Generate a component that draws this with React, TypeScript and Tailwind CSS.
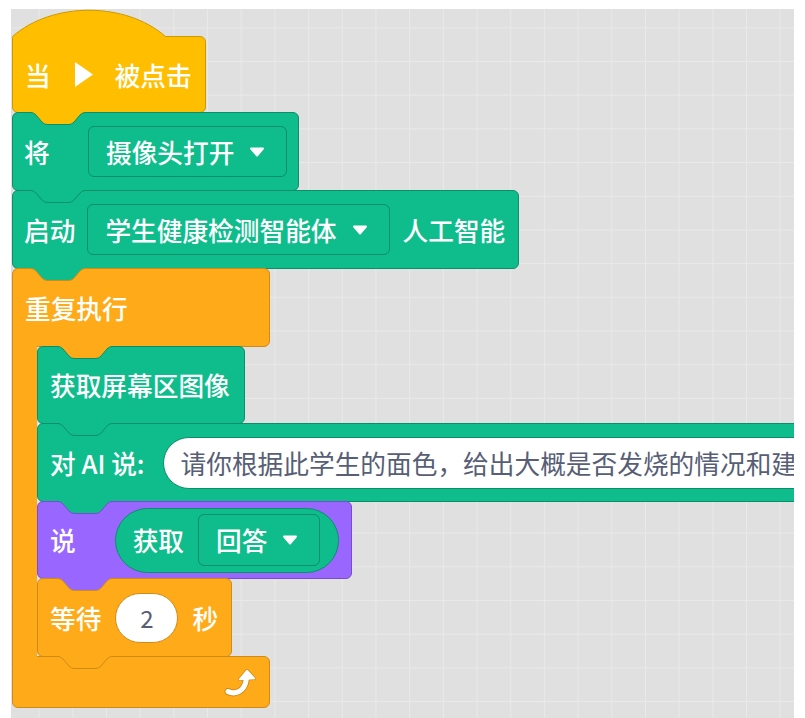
import React from "react";

// tab of the block above, sitting in the notch of the block below
function Notch({ className, fill, stroke }: { className: string; fill: string; stroke: string }) {
  return (
    <svg className={`absolute top-[-1px] ${className}`} width="56" height="14" viewBox="0 0 56 14">
      <path
        d="M0 0 L0 0.5 C3 0.5 4.5 1.5 6 3 L12 10 C13.5 11.5 15 12.5 18 12.5 H38 C41 12.5 42.5 11.5 44 10 L50 3 C51.5 1.5 53 0.5 56 0.5 L56 0 Z"
        fill={fill}
      />
      <path
        d="M0 0.5 C3 0.5 4.5 1.5 6 3 L12 10 C13.5 11.5 15 12.5 18 12.5 H38 C41 12.5 42.5 11.5 44 10 L50 3 C51.5 1.5 53 0.5 56 0.5"
        fill="none"
        stroke={stroke}
      />
    </svg>
  );
}

function Caret() {
  return (
    <svg width="16" height="10" viewBox="0 0 16 10">
      <path d="M2 1.5 H14 L8 8.5 Z" fill="white" stroke="white" strokeWidth="2" strokeLinejoin="round" />
    </svg>
  );
}

function Dropdown({ label, className }: { label: string; className: string }) {
  return (
    <div className={`flex items-center gap-[15px] rounded-md border border-[#0b8e69] pl-[17px] pr-[21px] ${className}`}>
      <span>{label}</span>
      <Caret />
    </div>
  );
}

export default function App() {
  return (
    <div className="min-h-[718px] bg-white pl-[11px] pt-[9px] font-['Noto_Sans_CJK_SC','Noto_Sans',sans-serif]">
      <div className="h-[709px] w-[783px] overflow-hidden bg-[#e0e0e0] bg-[linear-gradient(to_right,#e9e9e9_1px,transparent_1px),linear-gradient(to_bottom,#e9e9e9_1px,transparent_1px)] bg-size-[33.7px_33.7px] bg-position-[27.6px_18.3px] pl-px">
        <div className="flex flex-col items-start pt-[27px] text-[25.7px] font-medium leading-none text-white">
          {/* when flag clicked */}
          <div className="relative flex h-[77px] items-center rounded-md rounded-tl-none border border-[#cc9900] bg-[#ffbf00] pl-[12px] pr-[13px]">
            <svg className="absolute left-[-1px] top-[-28px]" width="156" height="29" viewBox="0 0 156 29">
              <path d="M0.5 27.5 C40.5 -7.5 113.5 -7.5 153.5 27.5 L153.5 29 L0.5 29 Z" fill="#ffbf00" />
              <path d="M0.5 27.5 C40.5 -7.5 113.5 -7.5 153.5 27.5" fill="none" stroke="#cc9900" />
            </svg>
            <span>当</span>
            <svg className="ml-[24px]" width="18" height="25" viewBox="0 0 18 25">
              <path d="M0 0 L18 12.5 L0 25 Z" fill="white" />
            </svg>
            <span className="ml-[22px]">被点击</span>
          </div>

          <div className="relative -mt-px flex h-[79px] items-center rounded-md border border-[#0b8e69] bg-[#0fbd8c] pl-[11px] pr-[11px]">
            <Notch className="left-[17px]" fill="#ffbf00" stroke="#0b8e69" />
            <span className="w-[51px]">将</span>
            <Dropdown label="摄像头打开" className="ml-[13px] h-[51px]" />
          </div>

          <div className="relative -mt-px flex h-[79px] items-center rounded-md border border-[#0b8e69] bg-[#0fbd8c] pl-[11px] pr-[13px]">
            <Notch className="left-[17px]" fill="#0fbd8c" stroke="#0b8e69" />
            <span>启动</span>
            <Dropdown label="学生健康检测智能体" className="ml-[12px] h-[51px]" />
            <span className="ml-[13px]">人工智能</span>
          </div>

          {/* forever */}
          <div className="-mt-px flex flex-col items-start">
            <div className="relative flex h-[79px] w-[258px] items-center rounded-md rounded-bl-none border border-[#cf8b17] bg-[#ffab19] pl-[12px]">
              <Notch className="left-[17px]" fill="#0fbd8c" stroke="#cf8b17" />
              <span>重复执行</span>
            </div>

            <div className="-mt-px flex">
              <div className="relative z-10 -my-px w-[25px] border-l border-[#cf8b17] bg-[#ffab19]" />
              <div className="flex flex-col items-start">
                <div className="relative flex h-[78px] items-center rounded-md border border-[#0b8e69] bg-[#0fbd8c] pl-[12px] pr-[14px]">
                  <Notch className="left-[19px]" fill="#ffab19" stroke="#0b8e69" />
                  <span>获取屏幕区图像</span>
                </div>

                <div className="relative -mt-px flex h-[79px] items-center whitespace-nowrap rounded-md border border-[#0b8e69] bg-[#0fbd8c] pl-[12px] pr-[12px]">
                  <Notch className="left-[19px]" fill="#0fbd8c" stroke="#0b8e69" />
                  <span>对 AI 说:</span>
                  <div className="ml-[18px] flex h-[52px] items-center rounded-full border border-[#0b8e69] bg-white px-[17px] font-normal text-[#575e75]">
                    请你根据此学生的面色，给出大概是否发烧的情况和建议
                  </div>
                </div>

                <div className="relative -mt-px flex h-[78px] items-center rounded-md border border-[#774dcb] bg-[#9966ff] pl-[12px] pr-[12px]">
                  <Notch className="left-[19px]" fill="#0fbd8c" stroke="#774dcb" />
                  <span>说</span>
                  <div className="ml-[39px] flex h-[65px] items-center rounded-full border border-[#0b8e69] bg-[#0fbd8c] pl-[17px] pr-[18px]">
                    <span>获取</span>
                    <Dropdown label="回答" className="ml-[14px] h-[52px]" />
                  </div>
                </div>

                <div className="relative -mt-px flex h-[79px] items-center rounded-md border border-[#cf8b17] bg-[#ffab19] pl-[12px] pr-[13px]">
                  <Notch className="left-[19px]" fill="#9966ff" stroke="#cf8b17" />
                  <span>等待</span>
                  <div className="ml-[14px] flex h-[50px] w-[63px] items-center justify-center rounded-full border border-[#cf8b17] bg-white text-[24px] font-normal text-[#575e75]">
                    2
                  </div>
                  <span className="ml-[14px]">秒</span>
                </div>
              </div>
            </div>

            <div className="relative -mt-px flex h-[52px] w-[258px] items-center justify-end rounded-md rounded-tl-none border border-[#cf8b17] bg-[#ffab19] pr-[13px]">
              <Notch className="left-[44px]" fill="#ffab19" stroke="#cf8b17" />
              <svg width="32" height="30" viewBox="0 0 32 30">
                <path d="M4 24.5 C10 27.5 21 26 22.5 11" fill="none" stroke="#d08c18" strokeWidth="7" strokeLinecap="round" />
                <path d="M15.5 12.5 L23 3.5 L30.5 11.5 Z" fill="#d08c18" stroke="#d08c18" strokeWidth="3" strokeLinejoin="round" />
                <path d="M4 24.5 C10 27.5 21 26 22.5 11" fill="none" stroke="white" strokeWidth="5" strokeLinecap="round" />
                <path d="M15.5 12.5 L23 3.5 L30.5 11.5 Z" fill="white" stroke="white" strokeWidth="1.5" strokeLinejoin="round" />
              </svg>
            </div>
          </div>
        </div>
      </div>
    </div>
  );
}
